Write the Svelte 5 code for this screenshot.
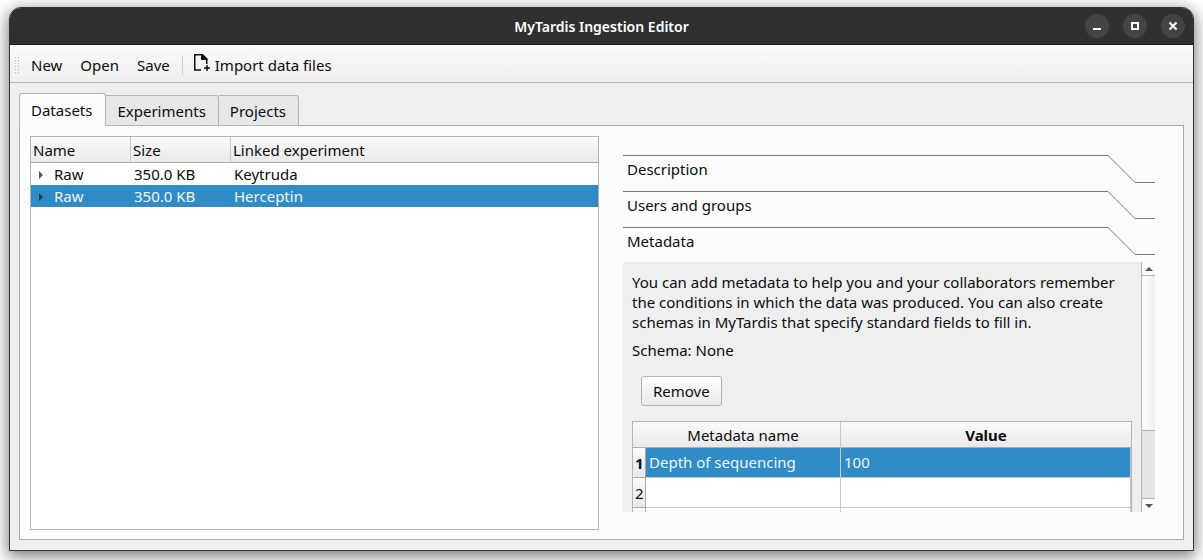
<script>
  const files = [
    { name: 'Raw', size: '350.0 KB', experiment: 'Keytruda' },
    { name: 'Raw', size: '350.0 KB', experiment: 'Herceptin' }
  ];
  const sections = ['Description', 'Users and groups', 'Metadata'];
  const tabs = ['Datasets', 'Experiments', 'Projects'];
  let activeTab = $state(0);
  let selected = $state(1);
</script>

<div class="desktop">
  <div class="window">
    <header class="titlebar">
      <h1>MyTardis Ingestion Editor</h1>
      <div class="controls">
        <button aria-label="Minimize"><svg viewBox="0 0 24 24"><path d="M8 15h8" /></svg></button>
        <button aria-label="Maximize"><svg viewBox="0 0 24 24"><path d="M9 9h6v6h-6z" /></svg></button>
        <button aria-label="Close"><svg viewBox="0 0 24 24"><path d="M8.500 8.500l7 7M15.500 8.500l-7 7" /></svg></button>
      </div>
    </header>

    <nav class="toolbar">
      <svg class="grip" viewBox="0 0 5 17" aria-hidden="true"><path d="M.5 0v17M3.500 0v17" /></svg>
      <button>New</button>
      <button>Open</button>
      <button>Save</button>
      <span class="divider"></span>
      <button class="import">
        <svg viewBox="0 0 18 20" aria-hidden="true">
          <path class="sheet" d="M8 17H1.750V1.750H9.500l4.250 4.250V11" />
          <path class="fold" d="M8 1.500h2l4.500 4.500V7H8z" />
          <path class="plus" d="M14 12v6M11 15h6" />
        </svg>
        Import data files
      </button>
    </nav>

    <main>
      <div class="tabs" role="tablist">
        {#each tabs as tab, i}
          <button role="tab" aria-selected={activeTab === i} class:active={activeTab === i} onclick={() => (activeTab = i)}>{tab}</button>
        {/each}
      </div>
      <section class="panel">
        <div class="tree">
          <table>
            <thead>
              <tr><th class="narrow">Name</th><th class="narrow">Size</th><th>Linked experiment</th></tr>
            </thead>
            <tbody>
              {#each files as file, i}
                <tr class:selected={selected === i} onclick={() => (selected = i)}>
                  <td><svg class="arrow" viewBox="0 0 4 8" aria-hidden="true"><path d="M0 0l4 4l-4 4z" /></svg>{file.name}</td>
                  <td>{file.size}</td>
                  <td>{file.experiment}</td>
                </tr>
              {/each}
            </tbody>
          </table>
        </div>

        <div class="toolbox">
          {#each sections as section}
            <button class="section">
              <span>{section}</span>
              <svg viewBox="0 0 47 28" aria-hidden="true"><path d="M0 .5l27 27h20" /></svg>
            </button>
          {/each}
          <div class="scroller">
            <div class="content">
              <p>You can add metadata to help you and your collaborators remember the conditions in which the data was produced. You can also create schemas in MyTardis that specify standard fields to fill in.</p>
              <p>Schema: None</p>
              <button class="remove">Remove</button>
              <table class="grid">
                <thead>
                  <tr><th class="index"></th><th class="key">Metadata name</th><th class="bold">Value</th></tr>
                </thead>
                <tbody>
                  <tr class="selected"><th class="bold">1</th><td>Depth of sequencing</td><td>100</td></tr>
                  <tr><th>2</th><td></td><td></td></tr>
                  <tr><th></th><td></td><td></td></tr>
                </tbody>
              </table>
            </div>
            <div class="scrollbar">
              <button aria-label="Scroll up"><svg viewBox="0 0 8 4"><path d="M0 4l4-4l4 4z" /></svg></button>
              <div class="track"><div class="thumb"></div></div>
              <button aria-label="Scroll down"><svg viewBox="0 0 8 4"><path d="M0 0l4 4l4-4z" /></svg></button>
            </div>
          </div>
        </div>
      </section>
    </main>
  </div>
</div>

<style>
  :global(body) { margin: 0; background: #fff; }
  * { box-sizing: border-box; }
  .desktop {
    display: flex;
    height: 100vh;
    padding: 7px 9px 9px;
    overflow: hidden;
    font: 15px/20px "Noto Sans", sans-serif;
    color: #0c0c0c;
  }
  button {
    margin: 0;
    padding: 0;
    border: 0;
    background: none;
    font: inherit;
    color: inherit;
  }
  svg { display: block; fill: none; }
  .window {
    display: flex;
    flex: 1;
    flex-direction: column;
    min-width: 0;
    border: 1px solid #333;
    border-radius: 12px 12px 0 0;
    background: #efefef;
    box-shadow: 0 4px 16px 1px rgba(0, 0, 0, 0.55);
  }
  .titlebar {
    display: grid;
    grid-template-columns: 1fr auto 1fr;
    align-items: center;
    height: 37px;
    padding: 0 8px;
    border-bottom: 1px solid #1e1e1e;
    border-radius: 11px 11px 0 0;
    background: #303030;
    color: #fff;
  }
  h1 { grid-column: 2; margin: 0; padding-top: 2px; font-size: 14px; font-weight: 600; }
  .controls { display: flex; justify-content: flex-end; gap: 14px; }
  .controls button { width: 24px; height: 24px; border-radius: 50%; background: #444; }
  .controls path { stroke: #fff; stroke-width: 2; }
  .toolbar {
    display: flex;
    align-items: center;
    height: 38px;
    padding: 3px 5px 0;
    border-bottom: 1px solid #b4b4b4;
    background: linear-gradient(#fafafa, #eee);
  }
  .grip {
    width: 5px;
    height: 17px;
    margin-right: 2px;
    stroke: #b4b4b4;
    stroke-dasharray: 1 2;
  }
  .toolbar button { padding: 0 9px; }
  .divider { width: 1px; height: 19px; margin: 0 1px 0 3px; background: #ccc; }
  .toolbar .import { display: flex; align-items: center; gap: 4px; }
  .import svg { width: 18px; height: 20px; margin-bottom: 4px; }
  .sheet { stroke: #111; stroke-width: 1.5; }
  .plus { stroke: #111; stroke-width: 1.5; }
  .fold { fill: #111; }
  main {
    display: flex;
    flex: 1;
    flex-direction: column;
    min-height: 0;
    padding: 10px 9px;
  }
  .tabs { position: relative; display: flex; align-items: flex-end; margin-bottom: -1px; }
  .tabs button {
    height: 31px;
    padding: 0 12px 0 11px;
    border: 1px solid #b4b4b4;
    border-left: 0;
    border-radius: 0 3px 0 0;
    background: #e7e7e7;
  }
  .tabs .active {
    height: 33px;
    padding: 0 13px 0 11px;
    border-left: 1px solid #b4b4b4;
    border-bottom: 0;
    border-radius: 3px 3px 0 0;
    background: #fcfcfc;
  }
  .panel {
    display: grid;
    flex: 1;
    grid-template-columns: 569fr 532fr;
    gap: 24px;
    min-height: 0;
    padding: 10px 28px 9px 10px;
    border: 1px solid #aaa;
    background: #fcfcfc;
  }
  .tree { border: 1px solid #b4b4b4; background: #fff; }
  table { width: 100%; border-collapse: separate; border-spacing: 0; table-layout: fixed; }
  th {
    padding: 0 2px;
    border-right: 1px solid #c8c8c8;
    border-bottom: 1px solid #aaa;
    background: linear-gradient(#fafafa, #e9e9e9);
    font-weight: 400;
    text-align: left;
  }
  thead th { height: 26px; }
  th:last-child { border-right: 0; }
  .narrow { width: 100px; }
  .tree td { height: 22px; padding: 0 3px; }
  .arrow { display: inline-block; width: 4px; height: 8px; margin: 0 11px 1px 5px; fill: #555; }
  .selected td { background: #308cc6; color: #eef5fa; }
  .selected .arrow { fill: #12384f; }
  .toolbox { display: flex; flex-direction: column; min-width: 0; min-height: 0; padding: 19px 0 18px; }
  .section { display: flex; flex: none; height: 36px; text-align: left; }
  .section span { flex: 1; height: 30px; padding: 3px 4px; border-top: 1px solid #777; }
  .section svg { width: 47px; height: 28px; stroke: #777; }
  .scroller { display: flex; flex: 1; min-height: 0; margin-top: -1px; overflow: hidden; background: #efefef; }
  .content { flex: 1; min-width: 0; padding: 10px 9px 0; overflow: hidden; }
  p { margin: 0 0 8px; }
  .remove {
    display: block;
    height: 30px;
    margin: 16px 9px 15px;
    padding: 0 11px;
    border: 1px solid #b4b4b4;
    border-radius: 3px;
    background: linear-gradient(#fdfdfd, #ebebeb);
  }
  .grid { border: 1px solid #b4b4b4; background: #fff; }
  .grid thead th { text-align: center; }
  .grid .index { width: 13px; border-right-color: transparent; background-clip: border-box; background-origin: border-box; }
  .grid .key { width: 195px; }
  .grid .bold { font-weight: 700; }
  .grid tbody th { padding: 0 2px; border-right: 1px solid #aaa; }
  .grid td { height: 30px; padding: 0 3px 1px; border-right: 1px solid #c8c8c8; border-bottom: 1px solid #c8c8c8; }
  .scrollbar { display: flex; flex-direction: column; width: 14px; border-left: 1px solid #b4b4b4; background: #e5e5e5; }
  .scrollbar button { display: flex; align-items: center; justify-content: center; height: 13px; background: #fafafa; }
  .scrollbar svg { width: 8px; height: 4px; fill: #555; }
  .track { flex: 1; border: solid #b4b4b4; border-width: 1px 0; }
  .thumb { height: 70%; border-bottom: 1px solid #b4b4b4; background: linear-gradient(90deg, #fdfdfd, #efefef); }
</style>
